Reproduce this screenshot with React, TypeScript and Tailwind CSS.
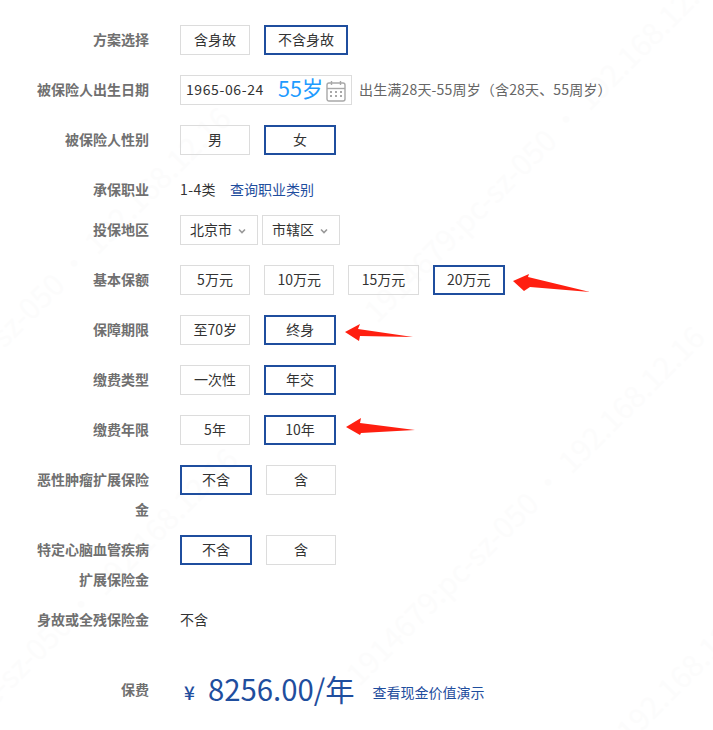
const font = { fontFamily: '"Noto Sans CJK SC", sans-serif' };

const WATERMARK = "1914679:pc-sz-050 · 192.168.12.16";
const MARKS = [
  [-117, 785],
  [368, 300],
  [-135, 1148],
  [350, 663],
  [408, 932],
  [-124, 444],
];

function Label({ children }: { children: React.ReactNode }) {
  return (
    <div className="w-[149px] shrink-0 pl-[36px] -translate-y-px text-right text-[14px] leading-[30px] font-semibold text-[#707070]">
      {children}
    </div>
  );
}

function Row({ label, tall, children }: { label: React.ReactNode; tall?: boolean; children: React.ReactNode }) {
  return (
    <div className={tall ? "flex gap-[31px] mb-[10px]" : "flex gap-[31px] mb-[20px]"}>
      <Label>{label}</Label>
      {children}
    </div>
  );
}

function Choice({ text, on }: { text: string; on?: boolean }) {
  return (
    <div
      className={
        on
          ? "h-[30px] min-w-[72px] px-[12px] pb-[2px] border-2 border-[#1f4e9e] flex items-center justify-center text-[14px] text-[#333]"
          : "h-[30px] min-w-[70px] px-[12.4px] pb-[2px] border border-[#dcdcdc] flex items-center justify-center text-[14px] text-[#333]"
      }
    >
      {text}
    </div>
  );
}

function Choices({ items, active }: { items: string[]; active: number }) {
  return (
    <div className="flex gap-[14px]">
      {items.map((t, i) => (
        <Choice key={t} text={t} on={i === active} />
      ))}
    </div>
  );
}

function Area({ text }: { text: string }) {
  return (
    <div className="h-[30px] w-[78px] pl-[9px] pb-[2px] border border-[#dcdcdc] flex items-center text-[14px] text-[#333]">
      {text}
      <svg width="8" height="6" viewBox="0 0 8 6" className="ml-[6px] mt-[3px]">
        <path d="M1 1.5 L4 4.5 L7 1.5" fill="none" stroke="#999" strokeWidth="1.6" />
      </svg>
    </div>
  );
}

function CalendarIcon() {
  return (
    <svg width="20" height="24" viewBox="0 0 20 24" className="mt-[2px]">
      <rect x="1" y="4" width="18" height="18" rx="2" fill="none" stroke="#a8a8a8" strokeWidth="1.4" />
      <path d="M1 9.5 H19" stroke="#a8a8a8" strokeWidth="1.4" />
      <path d="M5.5 2 V6 M14.5 2 V6" stroke="#a8a8a8" strokeWidth="1.4" />
      {[5, 10, 15].map((x) =>
        [13, 17].map((y) => <rect key={`${x}-${y}`} x={x - 1} y={y - 1} width="2" height="2" fill="#a8a8a8" />)
      )}
    </svg>
  );
}

export default function App() {
  return (
    <div className="relative w-[713px] h-[730px] overflow-hidden bg-white" style={font}>
      {/* 水印 */}
      {MARKS.map(([x, y]) => (
        <span
          key={`${x}-${y}`}
          className="absolute origin-left -rotate-45 whitespace-nowrap text-[30px] leading-none text-[#fcfcfc] pointer-events-none"
          style={{ left: x, top: y }}
        >
          {WATERMARK}
        </span>
      ))}

      <div className="relative pt-[25px]">
        <Row label="方案选择">
          <Choices items={["含身故", "不含身故"]} active={1} />
        </Row>

        <Row label="被保险人出生日期">
          <div className="flex items-center">
            <div className="h-[30px] w-[172px] pl-[5px] border border-[#dcdcdc] flex items-center text-[14px] text-[#333]">
              <span className="w-[92px] pb-[2px] tracking-[0.6px]">1965-06-24</span>
              <span className="w-[48px] pb-[4px] text-[21.5px] text-[#1e9bff]">55岁</span>
              <CalendarIcon />
            </div>
            <span className="ml-[7px] pb-[2px] text-[14px] tracking-[0.17px] text-[#666]">
              出生满28天-55周岁（含28天、55周岁）
            </span>
          </div>
        </Row>

        <Row label="被保险人性别">
          <Choices items={["男", "女"]} active={1} />
        </Row>

        <Row label="承保职业" tall>
          <div className="flex items-center h-[30px] pb-[2px] text-[14px] text-[#333]">
            <span className="w-[50px] tracking-[0.4px]">1-4类</span>
            <span className="text-[#1f4e9e]">查询职业类别</span>
          </div>
        </Row>

        <Row label="投保地区">
          <div className="flex gap-[4px]">
            <Area text="北京市" />
            <Area text="市辖区" />
          </div>
        </Row>

        <Row label="基本保额">
          <Choices items={["5万元", "10万元", "15万元", "20万元"]} active={3} />
        </Row>
        <Row label="保障期限">
          <Choices items={["至70岁", "终身"]} active={1} />
        </Row>
        <Row label="缴费类型">
          <Choices items={["一次性", "年交"]} active={1} />
        </Row>
        <Row label="缴费年限">
          <Choices items={["5年", "10年"]} active={1} />
        </Row>

        <Row label="恶性肿瘤扩展保险金" tall>
          <Choices items={["不含", "含"]} active={0} />
        </Row>
        <Row label="特定心脑血管疾病扩展保险金" tall>
          <Choices items={["不含", "含"]} active={0} />
        </Row>

        <Row label="身故或全残保险金">
          <div className="flex items-center h-[30px] pb-[2px] text-[14px] text-[#333]">不含</div>
        </Row>

        <div className="flex gap-[31px] mt-[40px]">
          <Label>保费</Label>
          <div className="flex items-center h-[30px] text-[#1f4e9e]">
            <span className="ml-[4px] w-[24px] text-[19px] font-medium mt-[5px]">¥</span>
            <span className="mb-[2px] text-[29.3px] leading-none">8256.00/年</span>
            <span className="ml-[18px] mt-[5px] text-[14px]">查看现金价值演示</span>
          </div>
        </div>
      </div>

      {/* 红色箭头标注 */}
      <svg width="713" height="730" className="absolute left-0 top-0 pointer-events-none">
        <polygon points="513,281 529,274 528,277 590,292 530,287 524,291" fill="#ff1f10" />
        <polygon points="345,332 360,324 358,329 413,337 360,336 359,341" fill="#ff1f10" />
        <polygon points="346,427 361,418 360,423 415,430 361,433 360,435" fill="#ff1f10" />
      </svg>
    </div>
  );
}
